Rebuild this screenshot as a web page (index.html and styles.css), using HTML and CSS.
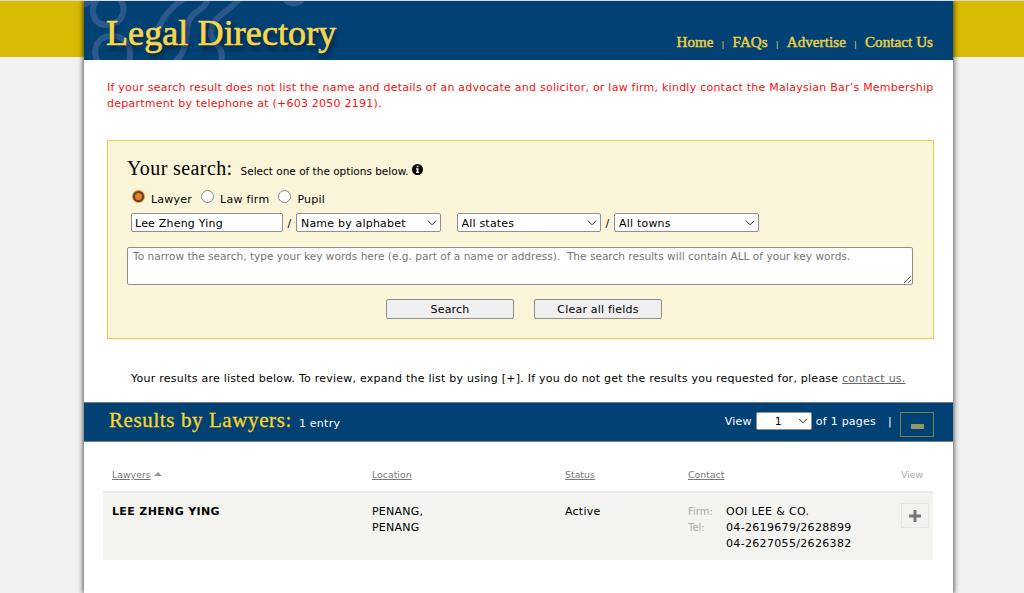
FILE: index.html
```html
<!DOCTYPE html>
<html lang="en">
<head>
<meta charset="UTF-8">
<title>Legal Directory</title>
<link rel="stylesheet" href="styles.css">
</head>
<body>
<div id="wrapper">
  <div id="header">
    <svg class="swirl" width="330" height="59" viewBox="0 0 330 59" fill="none" stroke="#2b598b" stroke-width="6">
      <path d="M-1 4C4 2 8 0 11 -4"/>
      <path d="M14 -3C5 8 8 24 23 24C39 23 44 8 35 -3"/>
      <path d="M14 61C7 48 14 35 27 35C40 34 49 44 45 61"/>
      <path d="M73 35C75 20 84 8 101 -3M91 61C108 45 99 28 107 16C113 8 121 9 124 -3M156 -3C144 12 130 14 127 29C124 41 142 44 137 61"/>
      <path d="M199 -6C203 5 216 5 220 -6"/>
    </svg>
    <h1>Legal Directory</h1>
    <div class="nav">
      <a>Home</a><span>|</span><a>FAQs</a><span>|</span><a>Advertise</a><span>|</span><a>Contact Us</a>
    </div>
  </div>

  <div class="notice">
    <div>If your search result does not list the name and details of an advocate and solicitor, or law firm, kindly contact the Malaysian Bar’s Membership</div>
    <div>department by telephone at (+603 2050 2191).</div>
  </div>

  <form class="search">
    <div class="search-title">
      <h2>Your search:</h2>
      <span>Select one of the options below.</span>
      <svg width="11" height="11" viewBox="0 0 11 11"><circle cx="5.5" cy="5.5" r="5.5"/><path d="M4.7 1.7h1.8v1.6H4.7zM4 4.3h2.5v3.5h.7V9H4V7.8h.7V5.5H4z" fill="#fff"/></svg>
    </div>
    <div class="radios">
      <label><input type="radio" name="type" checked>Lawyer</label>
      <label><input type="radio" name="type">Law firm</label>
      <label><input type="radio" name="type">Pupil</label>
    </div>
    <div class="fields">
      <input type="text" value="Lee Zheng Ying">
      <span>/</span>
      <select><option>Name by alphabet</option></select>
      <select class="states"><option>All states</option></select>
      <span>/</span>
      <select><option>All towns</option></select>
    </div>
    <textarea placeholder="To narrow the search, type your key words here (e.g. part of a name or address).&nbsp; The search results will contain ALL of your key words."></textarea>
    <div class="buttons">
      <button type="button">Search</button>
      <button type="button">Clear all fields</button>
    </div>
  </form>

  <p class="review">Your results are listed below. To review, expand the list by using [+]. If you do not get the results you requested for, please <a>contact us.</a></p>

  <div class="results-bar">
    <h2>Results by Lawyers:</h2>
    <span class="count">1 entry</span>
    <div class="pager">
      <span class="view">View</span>
      <select><option>1</option></select>
      <span class="pages">of 1 pages</span>
      <span class="sep">|</span>
      <a class="collapse"><i></i></a>
    </div>
  </div>

  <table>
    <tr class="head">
      <th class="c1"><u>Lawyers</u> <svg width="8" height="4" viewBox="0 0 8 4"><path d="M0 4L4 0L8 4z" fill="#999"/></svg></th>
      <th class="c2"><u>Location</u></th>
      <th class="c3"><u>Status</u></th>
      <th class="c4"><u>Contact</u></th>
      <th class="c5">View</th>
    </tr>
    <tr class="row">
      <td><b>LEE ZHENG YING</b></td>
      <td>PENANG,<br>PENANG</td>
      <td>Active</td>
      <td>
        <div class="contact">
          <span class="label">Firm:</span><span>OOI LEE &amp; CO.</span>
          <span class="label">Tel:</span><span>04-2619679/2628899<br>04-2627055/2626382</span>
        </div>
      </td>
      <td class="c5"><a class="expand"><svg width="12" height="12" viewBox="0 0 12 12"><path d="M6 0v12M0 6h12" stroke="#777" stroke-width="3"/></svg></a></td>
    </tr>
  </table>
</div>
</body>
</html>
```

FILE: styles.css
```css
*{box-sizing:border-box;}

body{
  margin:0;
  border-top:1px solid #dadade;
  background:linear-gradient(#d8bb04 57px,#f0f2f1 57px);
  font:11px/16px Verdana,"DejaVu Sans",sans-serif;
  letter-spacing:.24px;
  color:#000;
}

h1,h2{margin:0;font-family:Georgia,"Liberation Serif",serif;font-weight:normal;}

#wrapper{
  width:869px;height:592px;margin-left:84px;
  background:#fff;
  box-shadow:0 0 5px 1px rgba(0,0,0,.65);
  clip-path:inset(0 -10px);
}

/* header */
#header{
  position:relative;height:59px;padding:0 20px 0 22px;
  display:flex;justify-content:space-between;
  background:#024174;
}
.swirl{position:absolute;left:0;top:0;}
#header h1{
  position:relative;
  font-size:36px;line-height:64px;
  color:#f8d74b;
  letter-spacing:.1px;
  -webkit-text-stroke:.7px #f8d74b;
  text-shadow:2px 4px 5px rgba(0,0,0,.6);
}
.nav{
  display:flex;padding-top:33px;
  font:15px/17px Georgia,"Liberation Serif",serif;
  letter-spacing:.1px;
  color:#e9cf3d;
  -webkit-text-stroke:.5px #e9cf3d;
}
.nav span{width:19px;text-align:center;font-size:9px;line-height:20px;-webkit-text-stroke:.2px #e9cf3d;}

.notice{height:80px;padding:20px 0 0 23px;color:#fb0f0c;white-space:nowrap;}

/* search form */
.search{
  width:827px;height:199px;margin-left:23px;padding:15px 19px;
  border:1px solid #e5d04c;
  background:#faf4d9;
}
.search-title{display:flex;align-items:baseline;height:33px;}
.search-title h2{font-size:20px;line-height:24px;margin-right:8px;letter-spacing:.4px;}
.search-title span{margin-right:4px;font-size:10.5px;letter-spacing:0;}
.search-title svg{align-self:flex-start;margin:8px 0 0 -1px;}

.radios{display:flex;height:24px;line-height:21px;}
.radios label{display:flex;margin-right:9px;}
.radios input{
  appearance:none;
  width:13px;height:13px;margin:1px 6px 0 0;
  border:1px solid #858585;border-radius:50%;
  background:#fff;
}
.radios label:first-child input{margin-left:6px;}
.radios input:checked{
  width:11px;height:11px;margin:2px 7px 0 1px;
  border:2px solid #4e4637;background:#f57c1a;
  box-shadow:0 0 0 1px #f5922e;
}

.fields{display:flex;height:34px;padding-left:4px;}
.fields span{width:13px;text-align:center;line-height:21px;}
input[type=text],select,textarea,button{
  font:11px Verdana,"DejaVu Sans",sans-serif;
  letter-spacing:.2px;
  color:#000;
  border:1px solid #8f8f8f;border-radius:2px;
}
input[type=text]{width:152px;height:19px;padding:1px 3px 0;}
select{
  appearance:none;
  width:144.5px;height:19px;padding:1px 4px 0;
  background:#fff url("data:image/svg+xml,%3Csvg xmlns='http://www.w3.org/2000/svg' width='10' height='6' fill='none' stroke='%23222'%3E%3Cpath d='M1 .8L5 4.8L9 .8'/%3E%3C/svg%3E") no-repeat right 3px center;
}
.states{margin-left:16px;}

textarea{display:block;width:786px;height:38px;padding:2px 5px;font-size:10.55px;letter-spacing:.01px;}
textarea::placeholder{color:#757575;}

.buttons{display:flex;justify-content:center;gap:20px;margin-top:14px;padding-left:7px;}
.buttons button{width:128px;height:20px;padding:1px 0 0;background:#efefef;}

.review{margin:32px 0 0 47px;height:31px;white-space:nowrap;}
.review a{color:#666;text-decoration:underline;}

/* results */
.results-bar{
  display:flex;height:40px;padding:0 19px 0 25px;
  border:1px solid #6b7b87;border-width:1px 0;
  background:#024174;color:#fff;
}
.results-bar h2{
  font-size:21px;line-height:35px;color:#fbd626;letter-spacing:.6px;
  -webkit-text-stroke:.3px #fbd626;
}
.count{margin-left:7px;line-height:41px;}
.pager{display:flex;margin-left:auto;line-height:37px;}
.pager select{width:56px;height:18px;margin:9px 4px 0;padding-left:18px;}
.sep{margin:0 8px 0 12px;}
.collapse{
  display:flex;justify-content:center;
  width:34px;height:25px;margin-top:9px;
  border:1px solid #76804f;
}
.collapse i{width:13px;height:5px;margin-top:11px;background:#939660;}

table{width:830px;margin:15px 0 0 19px;border-collapse:collapse;table-layout:fixed;}
th,td{padding:0 0 0 9px;text-align:left;vertical-align:top;font-weight:normal;}
.head th{height:35px;padding-top:10px;font-size:9.3px;letter-spacing:.04px;color:#777;}
.head svg{vertical-align:2px;}
.c1{width:260px;}
.c2{width:193px;}
.c3{width:123px;}
.head .c5{color:#aaa;}
.c5{width:41px;}
.row{background:#f3f4f0;border-top:2px solid #e5ebf3;}
.row td{height:68px;padding-top:11px;}
.row b{letter-spacing:.36px;}
.row .c5{padding-top:10px;}
.contact{display:grid;grid-template-columns:38px auto;letter-spacing:.33px;}
.label{color:#aaa;font-size:10px;letter-spacing:0;}
.expand{
  display:flex;align-items:center;justify-content:center;
  width:28px;height:25px;
  border:1px solid #e5e6e3;
}
```
